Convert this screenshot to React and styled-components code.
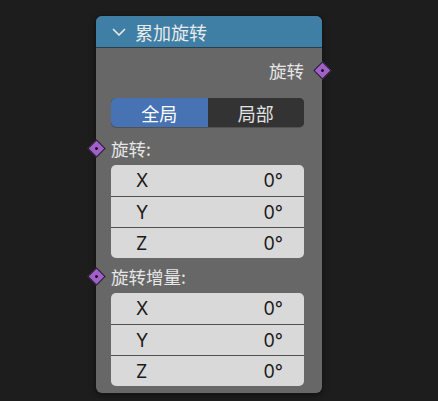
import React from "react";
import styled, { createGlobalStyle } from "styled-components";

const Global = createGlobalStyle`
  html, body { margin: 0; padding: 0; background: #1d1d1d; }
  body { font-family: "Inter", "Noto Sans CJK SC", sans-serif; }
`;

const Canvas = styled.div`
  width: 438px;
  height: 401px;
  padding: 16px 0 0 96px;
  box-sizing: border-box;
  overflow: hidden;
`;

const Node = styled.div`
  position: relative;
  width: 226px;
  height: 377px;
  box-sizing: border-box;
  background: #676767;
  border-radius: 6px;
  box-shadow: 0 0 0 1px #161616, 0 2px 6px rgba(0,0,0,0.5);
  display: flex;
  flex-direction: column;
`;

const Header = styled.div`
  height: 31px;
  background: #3f7fa5;
  border-radius: 6px 6px 0 0;
  border-bottom: 1px solid #2a3f4c;
  display: flex;
  align-items: center;
  padding-left: 16px;
  gap: 9px;
  color: #eaeaea;
  font-size: 18px;
  font-family: "Noto Sans CJK SC", sans-serif;
`;

const Body = styled.div`
  display: flex;
  flex-direction: column;
  padding: 0 18px 0 15px;
`;

const Row = styled.div`
  position: relative;
  height: 28px;
  display: flex;
  align-items: center;
  justify-content: ${p => (p.$right ? "flex-end" : "flex-start")};
  margin-top: ${p => p.$mt}px;
  color: #e6e6e6;
  font-size: 17.5px;
  font-family: "Noto Sans CJK SC", sans-serif;
`;

const Socket = styled.div`
  position: absolute;
  top: 50%;
  ${p => (p.$side === "right" ? "right: -24.5px;" : "left: -21.5px;")}
  width: 11px;
  height: 11px;
  margin-top: -6px;
  background: #a160c9;
  border: 1px solid #1e1e1e;
  transform: rotate(45deg);
  display: flex;
  align-items: center;
  justify-content: center;
  &::after {
    content: "";
    width: 3px;
    height: 3px;
    border-radius: 50%;
    background: #1e1020;
  }
`;

const Toggle = styled.div`
  margin-top: 14px;
  height: 29px;
  display: flex;
  border-radius: 5px;
  overflow: hidden;
  background: #2f2f2f;
  box-shadow: 0 1px 0 rgba(0,0,0,0.2);
`;

const ToggleBtn = styled.div`
  flex: 1;
  display: flex;
  align-items: center;
  justify-content: center;
  background: ${p => (p.$active ? "#4772b3" : "#333333")};
  color: ${p => (p.$active ? "#ffffff" : "#e2e2e2")};
  font-size: 18px;
  font-family: "Noto Sans CJK SC", sans-serif;
`;

const Vector = styled.div`
  margin-top: 3px;
  border-radius: 5px;
  overflow: hidden;
  background: #d9d9d9;
  display: flex;
  flex-direction: column;
`;

const Field = styled.div`
  height: 31px;
  box-sizing: border-box;
  display: flex;
  align-items: center;
  justify-content: space-between;
  padding: 0 21px 0 25px;
  color: #1a1a1a;
  font-size: 18px;
  font-family: "Inter", "DejaVu Sans", sans-serif;
  & + & { border-top: 1px solid #505050; }
`;

const Chevron = () => (
  <svg width="14" height="10" viewBox="0 0 14 10">
    <path d="M1.5 2.5 L7 8 L12.5 2.5" fill="none" stroke="#e8e8e8" strokeWidth="1.7" strokeLinecap="round" strokeLinejoin="round" />
  </svg>
);

const VectorBox = () => (
  <Vector>
    {["X", "Y", "Z"].map(a => (
      <Field key={a}>
        <span>{a}</span>
        <span>0°</span>
      </Field>
    ))}
  </Vector>
);

export default function App() {
  return (
    <Canvas>
      <Global />
      <Node>
        <Header>
          <Chevron />
          <span>累加旋转</span>
        </Header>
        <Body>
          <Row $right $mt={8}>
            旋转
            <Socket $side="right" />
          </Row>
          <Toggle>
            <ToggleBtn $active>全局</ToggleBtn>
            <ToggleBtn>局部</ToggleBtn>
          </Toggle>
          <Row $mt={7}>
            <Socket $side="left" />
            旋转:
          </Row>
          <VectorBox />
          <Row $mt={4}>
            <Socket $side="left" />
            旋转增量:
          </Row>
          <VectorBox />
        </Body>
      </Node>
    </Canvas>
  );
}
